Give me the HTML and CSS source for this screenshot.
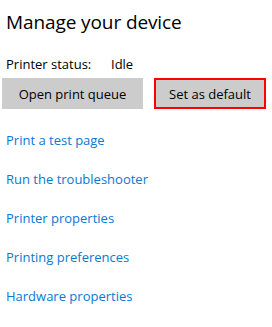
FILE: index.html
```html
<!DOCTYPE html>
<html lang="en">
<head>
    <meta charset="UTF-8">
    <title>Manage your device</title>
    <link rel="stylesheet" href="styles.css">
</head>
<body>
<div class="page">
    <h1>Manage your device</h1>

    <div class="status">
        <span class="status-label">Printer status:</span>
        <span class="status-value">Idle</span>
    </div>

    <div class="actions">
        <button class="btn">Open print queue</button>
        <button class="btn focused">Set as default</button>
    </div>

    <!-- links -->
    <ul class="links">
        <li><a href="#">Print a test page</a></li>
        <li><a href="#">Run the troubleshooter</a></li>
        <li><a href="#">Printer properties</a></li>
        <li><a href="#">Printing preferences</a></li>
        <li><a href="#">Hardware properties</a></li>
    </ul>
</div>
</body>
</html>
```

FILE: styles.css
```css
* {
    margin: 0;
    padding: 0;
    box-sizing: border-box;
}

body {
    font-family: 'Open Sans', 'Noto Sans', Arial, sans-serif;
    background: #fff;
    color: #000;
}

.page {
    padding: 7px 6px 0 6px;
}

h1 {
    font-size: 19px;
    font-weight: 400;
    line-height: 30px;
    letter-spacing: -0.1px;
}

.status {
    display: flex;
    margin-top: 18px;
    font-size: 13px;
    line-height: 18px;
}

.status-label {
    width: 105px;
}

.actions {
    display: flex;
    gap: 11px;
    margin-top: 5px;
    margin-left: -4px;
}

button {
    font-family: inherit;
    font-size: 13px;
    height: 31px;
    border: none;
    background: #cccccc;
    color: #000;
    cursor: pointer;
}

.btn {
    width: 141px;
}

.btn.focused {
    width: 112px;
    border: 2px solid #ff0000;
}

.links {
    list-style: none;
    margin-top: 20px;
}

.links li {
    height: 39px;
    line-height: 20px;
}

.links a {
    font-size: 13px;
    color: #0a78d4;
    text-decoration: none;
}
```
